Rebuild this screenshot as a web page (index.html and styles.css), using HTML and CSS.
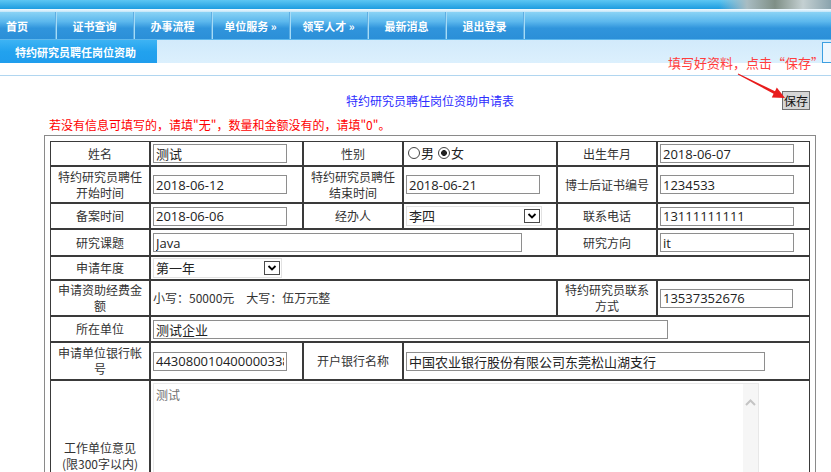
FILE: index.html
```html
<!DOCTYPE html>
<html lang="zh-CN">
<head>
<meta charset="utf-8">
<title>特约研究员聘任岗位资助申请表</title>
<link rel="stylesheet" href="styles.css">
</head>
<body>
<header class="top">
  <div class="banner"><div class="banner-photo"></div></div>
  <div class="banner-line"></div>
  <nav class="nav">
    <a class="nav-item first">首页</a>
    <a class="nav-item">证书查询</a>
    <a class="nav-item">办事流程</a>
    <a class="nav-item">单位服务 »</a>
    <a class="nav-item">领军人才 »</a>
    <a class="nav-item">最新消息</a>
    <a class="nav-item">退出登录</a>
  </nav>
  <div class="subbar">
    <div class="tab">特约研究员聘任岗位资助</div>
    <div class="subbar-box"></div>
  </div>
  <div class="gap"></div>
</header>

<div class="annotation">填写好资料，点击“保存”</div>
<svg class="arrow" width="55" height="35" viewBox="0 0 55 35">
  <polygon points="3.2,3.6 40,21.2 41.8,17.6 50,28 36.8,27.4 38.6,23.8 2.8,4.4" fill="#e81c1c"/>
</svg>

<main class="main">
  <div class="title-row">
    <h1 class="title">特约研究员聘任岗位资助申请表</h1>
    <button class="save" type="button">保存</button>
  </div>
  <p class="hint">若没有信息可填写的，请填&quot;无&quot;，数量和金额没有的，请填&quot;0&quot;。</p>
  <div class="frame">
    <table class="form">
      <colgroup>
        <col class="c-lbl"><col class="c-val"><col class="c-lbl"><col class="c-val2"><col class="c-lbl"><col class="c-val">
      </colgroup>
      <tr class="r25">
        <td class="lbl">姓名</td>
        <td><input class="inp w134" value="测试"></td>
        <td class="lbl">性别</td>
        <td><span class="radios"><label class="rad"><input type="radio" name="sex">男</label><label class="rad"><input type="radio" name="sex" checked>女</label></span></td>
        <td class="lbl">出生年月</td>
        <td><input class="inp w134" value="2018-06-07"></td>
      </tr>
      <tr class="r37">
        <td class="lbl">特约研究员聘任<br>开始时间</td>
        <td><input class="inp w134" value="2018-06-12"></td>
        <td class="lbl">特约研究员聘任<br>结束时间</td>
        <td><input class="inp w134" value="2018-06-21"></td>
        <td class="lbl">博士后证书编号</td>
        <td><input class="inp w134" value="1234533"></td>
      </tr>
      <tr class="r26">
        <td class="lbl">备案时间</td>
        <td><input class="inp w134" value="2018-06-06"></td>
        <td class="lbl">经办人</td>
        <td>
          <div class="sel sel-136"><span class="sel-text">李四</span><span class="sel-arrow"><svg width="10" height="8" viewBox="0 0 10 8"><polyline points="1.5,2 5,5.5 8.5,2" fill="none" stroke="#000" stroke-width="1.8"/></svg></span></div>
        </td>
        <td class="lbl">联系电话</td>
        <td><input class="inp w134" value="13111111111"></td>
      </tr>
      <tr class="r27">
        <td class="lbl">研究课题</td>
        <td colspan="3"><input class="inp w369" value="Java"></td>
        <td class="lbl">研究方向</td>
        <td><input class="inp w134" value="it"></td>
      </tr>
      <tr class="r24">
        <td class="lbl">申请年度</td>
        <td colspan="5">
          <div class="sel sel-129"><span class="sel-text">第一年</span><span class="sel-arrow"><svg width="10" height="8" viewBox="0 0 10 8"><polyline points="1.5,2 5,5.5 8.5,2" fill="none" stroke="#000" stroke-width="1.8"/></svg></span></div>
        </td>
      </tr>
      <tr class="r36">
        <td class="lbl">申请资助经费金<br>额</td>
        <td colspan="3" class="txt">小写：50000元　大写：伍万元整</td>
        <td class="lbl">特约研究员联系<br>方式</td>
        <td><input class="inp w133" value="13537352676"></td>
      </tr>
      <tr class="r26">
        <td class="lbl">所在单位</td>
        <td colspan="5"><input class="inp w515" value="测试企业"></td>
      </tr>
      <tr class="r38">
        <td class="lbl">申请单位银行帐<br>号</td>
        <td><input class="inp w134" value="443080010400000338"></td>
        <td class="lbl">开户银行名称</td>
        <td colspan="3"><input class="inp w359" value="中国农业银行股份有限公司东莞松山湖支行"></td>
      </tr>
      <tr class="r152">
        <td class="lbl">工作单位意见<br>(限300字以内)</td>
        <td colspan="5" class="ta-cell">
          <div class="ta-wrap">
            <textarea class="ta">测试</textarea>
            <div class="scroll"><svg width="11" height="7" viewBox="0 0 11 7"><polyline points="1,6 5.5,1.5 10,6" fill="none" stroke="#c4c4c4" stroke-width="2"/></svg></div>
          </div>
        </td>
      </tr>
    </table>
  </div>
</main>
</body>
</html>
```

FILE: styles.css
```css
html {
  overflow: hidden;
}

body {
  margin: 0;
  background: #ffffff;
  font-family: "Noto Sans CJK SC", "Open Sans", sans-serif;
  color: #333333;
  position: relative;
}

/* ---------- header ---------- */
.banner {
  height: 9px;
  display: flex;
  justify-content: flex-end;
  background: linear-gradient(#5cc6f3, #1c9ce0);
}

.banner-photo {
  width: 112px;
  background: linear-gradient(90deg, rgba(160, 190, 200, 0) 0%, #a9bcc2 25%, #7f8f86 50%, #c4d0d2 75%, #8aa3ad 100%);
}

.banner-line {
  height: 3px;
  background: linear-gradient(#f4fbff, #bfe4f8);
}

.nav {
  display: flex;
  height: 27px;
  background: linear-gradient(#8ad3f5 0%, #5cb8ed 35%, #3095dc 60%, #2b8fd8 100%);
  border-bottom: 1px solid #5db8ed;
}

.nav-item {
  box-sizing: border-box;
  width: 78px;
  display: flex;
  align-items: center;
  justify-content: center;
  color: #ffffff;
  font-size: 11px;
  font-weight: bold;
  border-right: 1px solid #5fafe3;
  box-shadow: 1px 0 0 #a6dbf6;
}

.nav-item.first {
  width: 56px;
  justify-content: flex-start;
  padding-left: 6px;
}

.subbar {
  height: 23px;
  display: flex;
  justify-content: space-between;
  background: linear-gradient(#d2eafb, #dcf0fd);
}

.tab {
  width: 157px;
  box-sizing: border-box;
  padding-left: 15px;
  display: flex;
  align-items: center;
  color: #ffffff;
  font-size: 11px;
  font-weight: bold;
  background: linear-gradient(#3db3f4, #22a2ee 50%, #1f9ded);
}

.subbar-box {
  width: 8px;
  height: 19px;
  margin-top: 2px;
  border: 1px solid #3c9fe1;
  border-right: 0;
  background: #eef7fe;
}

.gap {
  height: 12px;
  border-bottom: 1px solid #b1d6f0;
}

/* ---------- annotation overlay ---------- */
.annotation {
  position: absolute;
  left: 668px;
  top: 55px;
  font-size: 13px;
  line-height: 16px;
  color: #ff3d3d;
  white-space: nowrap;
}

.arrow {
  position: absolute;
  left: 735px;
  top: 70px;
}

/* ---------- main ---------- */
.main {
  width: 772px;
  margin-left: 44px;
}

.title-row {
  display: grid;
  grid-template-columns: 1fr auto 1fr;
  align-items: center;
  margin-top: 15px;
  height: 19px;
}

.title {
  grid-column: 2;
  margin: 0;
  font-size: 12px;
  font-weight: normal;
  color: #2d2dff;
  line-height: 16px;
}

.save {
  grid-column: 3;
  justify-self: end;
  margin: 0 6px 0 0;
  width: 28px;
  height: 19px;
  padding: 0;
  border: 1px solid #707070;
  background: #d6d6d6;
  font-family: "Noto Sans CJK SC", sans-serif;
  font-size: 12px;
  line-height: 15px;
  color: #111111;
}

.hint {
  margin: 7px 0 0 5px;
  font-size: 12px;
  line-height: 16px;
  color: #ff0000;
}

.frame {
  margin-top: 2px;
  border: 1px solid #8a8a8a;
  padding: 5px;
}

/* ---------- form table ---------- */
.form {
  width: 760px;
  table-layout: fixed;
  border-collapse: separate;
  border-spacing: 0;
}

.c-lbl { width: 100px; }
.c-val { width: 153px; }
.c-val2 { width: 154px; }

.form td {
  border: 1px solid #3a3a3a;
  padding: 0 2px;
  font-size: 12px;
  line-height: 16px;
  color: #333333;
  vertical-align: middle;
  white-space: nowrap;
  overflow: hidden;
}

.form td.lbl {
  text-align: center;
  padding: 0 1px;
}

.form td.txt {
  padding-left: 2px;
}

.r24 { height: 24px; }
.r25 { height: 25px; }
.r26 { height: 26px; }
.r27 { height: 27px; }
.r36 { height: 36px; }
.r37 { height: 37px; }
.r38 { height: 38px; }
.r152 { height: 152px; }

.inp {
  box-sizing: border-box;
  height: 19px;
  margin: 0;
  padding: 0 2px;
  border: 1px solid #8e8e8e;
  background: #ffffff;
  font-family: "Open Sans", "Noto Sans CJK SC", sans-serif;
  font-size: 13px;
  color: #222222;
  vertical-align: middle;
  outline: none;
}

.w133 { width: 133px; }
.w134 { width: 134px; }
.w359 { width: 359px; }
.w369 { width: 369px; }
.w515 { width: 515px; }

.radios {
  display: inline-flex;
  align-items: center;
  gap: 4px;
  margin-left: 2px;
  font-size: 13px;
  color: #222222;
}

.rad {
  display: inline-flex;
  align-items: center;
}

.rad input {
  appearance: none;
  -webkit-appearance: none;
  box-sizing: border-box;
  width: 12px;
  height: 12px;
  margin: 0 1px 0 0;
  border: 1px solid #444444;
  border-radius: 50%;
  background: #ffffff;
}

.rad input:checked {
  background: radial-gradient(circle, #222222 0 2.6px, #ffffff 3.2px);
}

.sel {
  box-sizing: border-box;
  display: inline-flex;
  align-items: center;
  height: 20px;
  padding: 0 1px 0 2px;
  border: 1px solid #e2e2e2;
  background: #ffffff;
  font-size: 13px;
  color: #222222;
  vertical-align: middle;
}

.sel-136 { width: 136px; }
.sel-129 { width: 129px; }

.sel-text {
  flex: 1;
}

.sel-arrow {
  box-sizing: border-box;
  width: 16px;
  height: 14px;
  display: flex;
  align-items: center;
  justify-content: center;
  border: 1px solid #4a4a4a;
  background: #ffffff;
}

.form td.ta-cell {
  vertical-align: top;
  padding-top: 2px;
}

.ta-wrap {
  box-sizing: border-box;
  display: flex;
  width: 606px;
  height: 146px;
  border: 1px solid #e8e8e8;
  background: #ffffff;
}

.ta {
  flex: 1;
  margin: 0;
  padding: 3px 2px;
  border: 0;
  resize: none;
  overflow: hidden;
  outline: none;
  font-family: "Noto Sans CJK SC", sans-serif;
  font-size: 12px;
  line-height: 16px;
  color: #707070;
}

.scroll {
  width: 15px;
  display: flex;
  justify-content: center;
  align-items: flex-start;
  padding-top: 15px;
  background: #f6f6f6;
}
```
